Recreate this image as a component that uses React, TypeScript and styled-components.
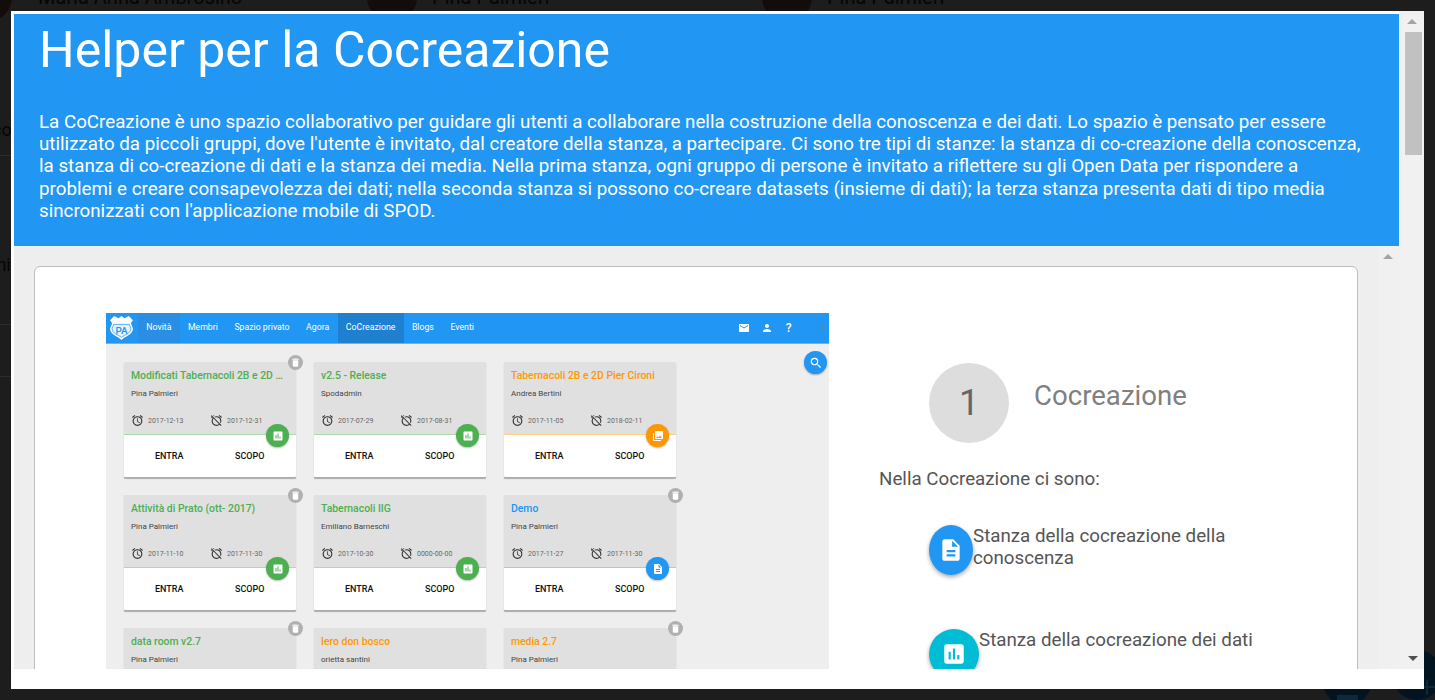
import React from "react";
import styled, { createGlobalStyle } from "styled-components";
import {
  MdAccessAlarm,
  MdAdd,
  MdAlarmOff,
  MdAssessment,
  MdDelete,
  MdDescription,
  MdEmail,
  MdPerson,
  MdPhotoLibrary,
  MdSearch,
} from "react-icons/md";

const Global = createGlobalStyle`
  html, body { margin: 0; padding: 0; height: 100%; overflow: hidden; background: #1c1c1c; }
  body { font-family: Roboto, "Liberation Sans", sans-serif; }
  #root { height: 700px; }
`;

const Page = styled.div`
  position: relative;
  width: 1435px;
  height: 700px;
  overflow: hidden;
  background: #1d1d1d;
`;

const BackdropRow = styled.div`
  display: flex;
  height: 11px;
  padding-left: 38px;
  color: #050505;
  font-size: 20px;
  line-height: 12px;
  overflow: hidden;
`;

const BackName = styled.span<{ $w: number }>`
  width: ${(p) => p.$w}px;
  margin-top: -9px;
`;

const Avatar = styled.div<{ $x: number; $y: number }>`
  position: absolute;
  left: ${(p) => p.$x}px;
  top: ${(p) => p.$y}px;
  width: 50px;
  height: 50px;
  border-radius: 50%;
  background: #120d0b;
`;

const LeftText = styled.div<{ $y: number }>`
  position: absolute;
  left: -8px;
  top: ${(p) => p.$y}px;
  color: #050505;
  font-size: 18px;
  line-height: 20px;
`;

const LeftRule = styled.div<{ $y: number }>`
  position: absolute;
  left: 0;
  width: 11px;
  top: ${(p) => p.$y}px;
  height: 1px;
  background: #2a2f2a;
`;

const BackFab = styled.div<{ $x: number; $y: number }>`
  position: absolute;
  left: ${(p) => p.$x}px;
  top: ${(p) => p.$y}px;
  width: 50px;
  height: 50px;
  border-radius: 50%;
  background: #02141f;
  color: #10293a;
  font-size: 26px;
  display: flex;
  align-items: flex-end;
  justify-content: center;
`;

const BackFabMark = styled.div`
  width: 21px;
  height: 5px;
  margin-bottom: 5px;
  background: #10293a;
`;

const BackFabPlus = styled.div`
  display: flex;
  margin: 0 -20px 0 0;
`;

const Modal = styled.div`
  position: absolute;
  left: 11px;
  top: 11px;
  width: 1413px;
  height: 678px;
  background: #fff;
  display: flex;
  flex-direction: column;
`;

const Frame = styled.div`
  display: flex;
  height: 658px;
  padding: 3px 0 0 3px;
  box-sizing: border-box;
`;

const Content = styled.div`
  width: 1385px;
  display: flex;
  flex-direction: column;
  overflow: hidden;
`;

const Header = styled.header`
  height: 232px;
  flex: none;
  box-sizing: border-box;
  padding: 0 30px 0 25px;
  background: #2196f3;
  color: #fff;
`;

const Title = styled.h1`
  margin: 0;
  padding-top: 6px;
  font-size: 50px;
  font-weight: 400;
  line-height: 60px;
`;

const Intro = styled.p`
  margin: 31px 0 0;
  font-size: 18.75px;
  line-height: 22.2px;
`;

const Body = styled.div`
  position: relative;
  flex: 1;
  display: flex;
  min-height: 0;
  background: #eee;
`;

const BodyPad = styled.div`
  width: 1364px;
  box-sizing: border-box;
  padding: 20px 20px 0;
  overflow: hidden;
`;

const Card = styled.div`
  display: flex;
  height: 500px;
  box-sizing: border-box;
  padding: 46px 0 0 71px;
  background: #fff;
  border: 1px solid #bdbdbd;
  border-radius: 6px;
`;

const Shot = styled.div`
  width: 723px;
  height: 356px;
  flex: none;
  background: #eee;
  overflow: hidden;
  filter: blur(0.35px);
`;

const Nav = styled.nav`
  display: flex;
  align-items: stretch;
  height: 30px;
  background: #2196f3;
  border-bottom: 1px solid #64b5f6;
  color: #fff;
  font-size: 8.75px;
`;

const Logo = styled.svg`
  width: 25px;
  height: 25px;
  margin: 2px 4px 0 3px;
  flex: none;
`;

const NavItem = styled.div<{ $bg?: string }>`
  display: flex;
  align-items: center;
  height: 30px;
  box-sizing: border-box;
  padding: 0 8.25px 2px;
  background: ${(p) => p.$bg || "transparent"};
`;

const NavRight = styled.div`
  margin-left: auto;
  display: flex;
  align-items: center;
  color: #fff;
`;

const NavLang = styled.span`
  margin: 0 4px 0 27px;
  font-size: 7.5px;
  color: #5a87ad;
`;

const NavHelp = styled.span`
  margin-left: 13px;
  font-size: 12px;
  font-weight: 500;
`;

const NavGlyph = styled.span`
  display: flex;
  margin-left: 11px;
  font-size: 12px;
`;

const ShotBody = styled.div`
  position: relative;
  display: grid;
  grid-template-columns: repeat(3, 172px);
  column-gap: 18px;
  row-gap: 18px;
  padding: 18px 0 0 18px;
`;

const SearchFab = styled.div`
  position: absolute;
  right: 2px;
  top: 7px;
  width: 23px;
  height: 23px;
  border-radius: 50%;
  background: #2196f3;
  color: #fff;
  font-size: 14px;
  display: flex;
  align-items: center;
  justify-content: center;
  box-shadow: 0 1px 2px rgba(0, 0, 0, 0.3);
`;

const RoomCard = styled.div`
  position: relative;
  height: 115px;
  background: #fff;
  border-radius: 1px;
  box-shadow: 0 1.5px 1px rgba(0, 0, 0, 0.28);
`;

const RoomTop = styled.div<{ $c: string }>`
  height: 72px;
  padding: 0 7px;
  background: #e0e0e0;
  background-clip: padding-box;
  border-bottom: 1px solid ${(p) => p.$c}77;
`;

const RoomTitle = styled.div<{ $c: string }>`
  padding-top: 7px;
  color: ${(p) => p.$c};
  font-size: 10.4px;
  font-weight: 500;
  line-height: 13px;
  white-space: nowrap;
  overflow: hidden;
  text-overflow: ellipsis;
`;

const RoomOwner = styled.div`
  margin-top: 6px;
  color: #444;
  font-size: 8px;
  line-height: 11px;
`;

const Dates = styled.div`
  display: flex;
  margin-top: 15px;
`;

const DateCell = styled.div`
  width: 79px;
  display: flex;
  align-items: center;
  gap: 4px;
  color: #666;
  font-size: 7px;
  svg {
    color: #333;
    font-size: 13px;
    flex: none;
  }
`;

const Actions = styled.div`
  display: flex;
  height: 41px;
  padding-top: 16px;
  box-sizing: border-box;
  padding-left: 31px;
  color: #111;
  font-size: 9px;
  font-weight: 500;
`;

const ActionLabel = styled.span`
  width: 80px;
  flex: none;
`;

const RoomFab = styled.div<{ $c: string }>`
  position: absolute;
  left: 142px;
  top: 62px;
  width: 23px;
  height: 23px;
  border-radius: 50%;
  background: ${(p) => p.$c};
  color: #fff;
  font-size: 12px;
  display: flex;
  align-items: center;
  justify-content: center;
  box-shadow: 0 1px 2px rgba(0, 0, 0, 0.25);
`;

const TrashBadge = styled.div`
  position: absolute;
  right: -7px;
  top: -7px;
  width: 15px;
  height: 15px;
  border-radius: 50%;
  background: #b0b0b0;
  color: #fff;
  font-size: 11px;
  display: flex;
  align-items: center;
  justify-content: center;
`;

const Steps = styled.div`
  flex: 1;
  box-sizing: border-box;
  padding: 50px 0 0 50px;
  color: #555;
  font-size: 18.75px;
`;

const StepHead = styled.div`
  display: flex;
  padding-left: 50px;
`;

const StepNumber = styled.div`
  width: 80px;
  height: 80px;
  flex: none;
  border-radius: 50%;
  background: #ddd;
  display: flex;
  align-items: center;
  justify-content: center;
  color: #666;
  font-size: 36px;
`;

const StepTitle = styled.div`
  margin: 15px 0 0 25px;
  color: #808080;
  font-size: 27.6px;
  line-height: 36px;
`;

const StepLead = styled.div`
  margin-top: 25px;
  line-height: 22px;
`;

const RoomRow = styled.div<{ $top: number }>`
  display: flex;
  align-items: flex-start;
  width: 345px;
  margin: ${(p) => p.$top}px 0 0 50px;
  line-height: 22px;
`;

const RoomRowIcon = styled.div<{ $c: string; $w: number }>`
  flex: none;
  width: ${(p) => p.$w}px;
  height: 50px;
  border-radius: 50%;
  background: ${(p) => p.$c};
  color: #fff;
  font-size: 26px;
  display: flex;
  align-items: center;
  justify-content: center;
  box-shadow: 0 2px 4px rgba(0, 0, 0, 0.35);
`;

const RoomRowText = styled.div`
  margin-top: 0;
`;

const InnerBar = styled.div`
  position: relative;
  flex: 1;
  background: #f0f0f0;
`;

const OuterBar = styled.div`
  position: relative;
  flex: 1;
  background: #f1f1f1;
  margin-top: -3px;
`;

const Thumb = styled.div`
  position: absolute;
  left: 6px;
  top: 21px;
  width: 17px;
  height: 123px;
  background: #c1c1c1;
`;

const Arrow = styled.div<{ $dir: "up" | "down"; $x: number; $y: number; $c: string }>`
  position: absolute;
  left: ${(p) => p.$x}px;
  top: ${(p) => p.$y}px;
  width: 0;
  height: 0;
  border-left: 5px solid transparent;
  border-right: 5px solid transparent;
  ${(p) =>
    p.$dir === "up"
      ? `border-bottom: 5px solid ${p.$c};`
      : `border-top: 5px solid ${p.$c};`}
`;

type Room = {
  title: string;
  owner: string;
  from: string;
  to: string;
  color: string;
  kind: "data" | "media" | "doc";
  trash: boolean;
};

const GREEN = "#4caf50";
const ORANGE = "#ff9800";
const BLUE = "#2196f3";

const rooms: Room[] = [
  { title: "Modificati Tabernacoli 2B e 2D Pier Cironi", owner: "Pina Palmieri", from: "2017-12-13", to: "2017-12-31", color: GREEN, kind: "data", trash: true },
  { title: "v2.5 - Release", owner: "Spodadmin", from: "2017-07-29", to: "2017-08-31", color: GREEN, kind: "data", trash: false },
  { title: "Tabernacoli 2B e 2D Pier Cironi", owner: "Andrea Bertini", from: "2017-11-05", to: "2018-02-11", color: ORANGE, kind: "media", trash: false },
  { title: "Attività di Prato (ott- 2017)", owner: "Pina Palmieri", from: "2017-11-10", to: "2017-11-30", color: GREEN, kind: "data", trash: true },
  { title: "Tabernacoli IIG", owner: "Emiliano Barneschi", from: "2017-10-30", to: "0000-00-00", color: GREEN, kind: "data", trash: false },
  { title: "Demo", owner: "Pina Palmieri", from: "2017-11-27", to: "2017-11-30", color: BLUE, kind: "doc", trash: true },
  { title: "data room v2.7", owner: "Pina Palmieri", from: "2017-11-10", to: "2017-11-30", color: GREEN, kind: "data", trash: true },
  { title: "Iero don bosco", owner: "orietta santini", from: "2017-11-10", to: "2017-11-30", color: ORANGE, kind: "media", trash: false },
  { title: "media 2.7", owner: "Pina Palmieri", from: "2017-11-10", to: "2017-11-30", color: ORANGE, kind: "media", trash: true },
];

const kindIcon = {
  data: <MdAssessment />,
  media: <MdPhotoLibrary />,
  doc: <MdDescription />,
};

const navItems = ["Novità", "Membri", "Spazio privato", "Agora", "CoCreazione", "Blogs", "Eventi"];

export default function App() {
  return (
    <Page>
      <Global />
      <Avatar $x={-38} $y={-28} />
      <Avatar $x={367} $y={-28} />
      <Avatar $x={762} $y={-28} />
      <LeftText $y={120}>co</LeftText>
      <LeftText $y={255}>ini</LeftText>
      <LeftText $y={342}>ii</LeftText>
      <LeftRule $y={155} />
      <LeftRule $y={324} />
      <LeftRule $y={376} />
      <BackFab $x={1322} $y={655}><BackFabMark /></BackFab>
      <BackFab $x={1392} $y={650}><BackFabPlus><MdAdd /></BackFabPlus></BackFab>
      <BackdropRow>
        <BackName $w={394}>Maria Anna Ambrosino</BackName>
        <BackName $w={395}>Pina Palmieri</BackName>
        <BackName $w={300}>Pina Palmieri</BackName>
      </BackdropRow>
      <Modal>
        <Frame>
          <Content>
            <Header>
              <Title>Helper per la Cocreazione</Title>
              <Intro>
                La CoCreazione è uno spazio collaborativo per guidare gli utenti a collaborare nella costruzione della conoscenza e dei dati. Lo spazio è pensato per essere utilizzato da piccoli gruppi, dove l'utente è invitato, dal creatore della stanza, a partecipare. Ci sono tre tipi di stanze: la stanza di co-creazione della conoscenza, la stanza di co-creazione di dati e la stanza dei media. Nella prima stanza, ogni gruppo di persone è invitato a riflettere su gli Open Data per rispondere a problemi e creare consapevolezza dei dati; nella seconda stanza si possono co-creare datasets (insieme di dati); la terza stanza presenta dati di tipo media sincronizzati con l'applicazione mobile di SPOD.
              </Intro>
            </Header>
            <Body>
              <BodyPad>
                <Card>
                  <Shot>
                    <Nav>
                      <Logo viewBox="0 0 24 24">
                        <path d="M5 1 L9 3 L12 1 L15 3 L19 1 L23 5 L21 8 L23 13 C23 19 16 20 12 24 C8 20 1 19 1 13 L3 8 L1 5 Z" fill="#fff" />
                        <path d="M4.5 9 H19.5 L21 13 C21 18 15 19 12 21.5 C9 19 3 18 3 13 Z" fill="#e3f2fd" stroke="#2196f3" strokeWidth="0.7" />
                        <text x="12" y="18" textAnchor="middle" fontSize="9.5" fontWeight="500" fill="#2196f3" fontFamily="Roboto, sans-serif">PA</text>
                      </Logo>
                      {navItems.map((n) => (
                        <NavItem key={n} $bg={n === "Novità" ? "#2a8fe2" : n === "CoCreazione" ? "#1f80d0" : undefined}>
                          {n}
                        </NavItem>
                      ))}
                      <NavRight>
                        <NavGlyph><MdEmail /></NavGlyph>
                        <NavGlyph><MdPerson /></NavGlyph>
                        <NavHelp>?</NavHelp>
                        <NavLang>IT</NavLang>
                      </NavRight>
                    </Nav>
                    <ShotBody>
                      <SearchFab><MdSearch /></SearchFab>
                      {rooms.map((r) => (
                        <RoomCard key={r.title}>
                          <RoomTop $c={r.color}>
                            <RoomTitle $c={r.color}>{r.title}</RoomTitle>
                            <RoomOwner>{r.owner}</RoomOwner>
                            <Dates>
                              <DateCell><MdAccessAlarm />{r.from}</DateCell>
                              <DateCell><MdAlarmOff />{r.to}</DateCell>
                            </Dates>
                          </RoomTop>
                          <Actions>
                            <ActionLabel>ENTRA</ActionLabel>
                            <ActionLabel>SCOPO</ActionLabel>
                          </Actions>
                          <RoomFab $c={r.color}>{kindIcon[r.kind]}</RoomFab>
                          {r.trash && <TrashBadge><MdDelete /></TrashBadge>}
                        </RoomCard>
                      ))}
                    </ShotBody>
                  </Shot>
                  <Steps>
                    <StepHead>
                      <StepNumber>1</StepNumber>
                      <StepTitle>Cocreazione</StepTitle>
                    </StepHead>
                    <StepLead>Nella Cocreazione ci sono:</StepLead>
                    <RoomRow $top={35}>
                      <RoomRowIcon $c="#2196f3" $w={44}><MdDescription /></RoomRowIcon>
                      <RoomRowText>Stanza della cocreazione della conoscenza</RoomRowText>
                    </RoomRow>
                    <RoomRow $top={54}>
                      <RoomRowIcon $c="#00bcd4" $w={50}><MdAssessment /></RoomRowIcon>
                      <RoomRowText>Stanza della cocreazione dei dati</RoomRowText>
                    </RoomRow>
                  </Steps>
                </Card>
              </BodyPad>
              <InnerBar>
                <Arrow $dir="up" $x={5} $y={8} $c="#a3a3a3" />
              </InnerBar>
            </Body>
          </Content>
          <OuterBar>
            <Thumb />
            <Arrow $dir="up" $x={8} $y={8} $c="#a3a3a3" />
            <Arrow $dir="down" $x={9} $y={645} $c="#505050" />
          </OuterBar>
        </Frame>
      </Modal>
    </Page>
  );
}
